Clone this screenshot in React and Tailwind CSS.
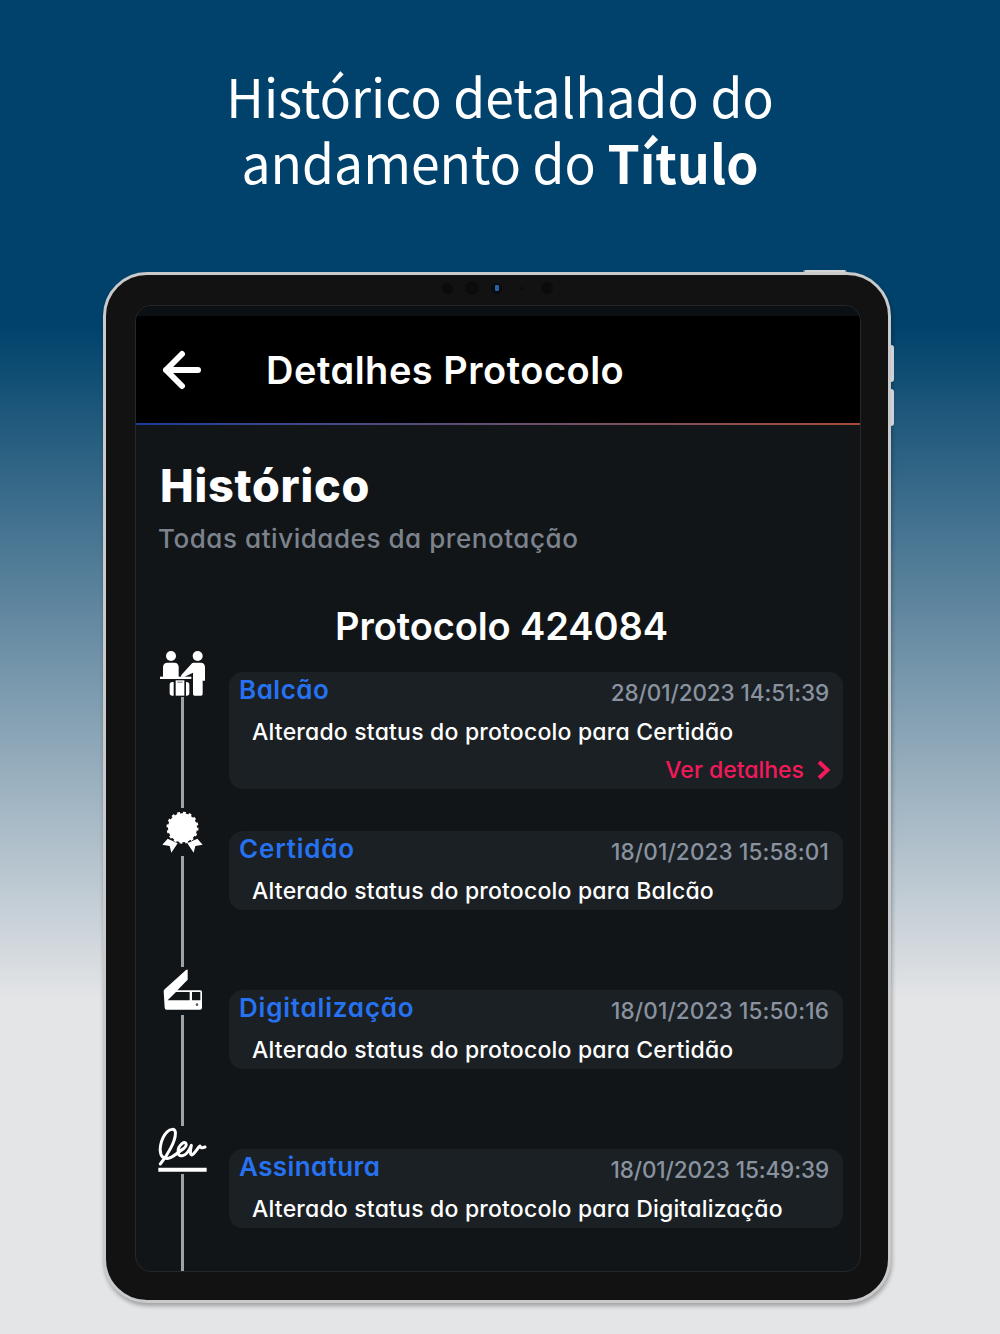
const lexish = "font-['Inter','Liberation_Sans',sans-serif] [font-feature-settings:'cv11']";

function CounterIcon() {
  return (
    <svg viewBox="24 27 147 144" className="block h-12 w-[49px]" fill="white">
      <circle cx="63" cy="48" r="15" />
      <circle cx="143" cy="48" r="15" />
      <path d="M39 111V82q0-14 14-14h20q13 0 13 14v29z" />
      <rect x="30" y="110" width="94" height="7" />
      <path d="M130 68h22q13 0 13 14v40h-7v40q0 5-5 5h-19q-5 0-5-5V98L96 114q-5-5-2-9l28-31q4-6 8-6z" />
      <path d="M71 126h-4q-8 0-8 8v25q0 8 8 8h4zM108 126h2q8 0 8 8v25q0 8-8 8h-2z" />
      <path d="M77 121h26v46H77z" />
      <path d="M82 125h16v3H82z" fill="#70757a" />
    </svg>
  );
}

function AwardIcon() {
  return (
    <svg viewBox="24 24 147 144" className="block h-12 w-[49px]" fill="white">
      <circle cx="97.5" cy="83" r="43.5" />
      <circle cx="97.5" cy="83" r="43" fill="none" stroke="white" strokeWidth="10" strokeDasharray="8.4 8.486" />
      <path d="M53 116l30 14-19 28-5-20-22-4z" />
      <path d="M142 116l-30 14 19 28 5-20 22-4z" />
    </svg>
  );
}

function ScannerIcon() {
  return (
    <svg viewBox="24 21 147 144" className="block h-12 w-[49px]" fill="white">
      <path
        fillRule="evenodd"
        d="M113 29v30L82 91h69q5 0 5 5v47q0 6-6 6H50q-6 0-6-6l-3-49q0-3 3-6l64-58q4-3 5-1zM78 96L53 121h66V96zM126 96v25h25V96z"
      />
      <circle cx="141" cy="134" r="4" fill="#5b6064" />
    </svg>
  );
}

function SignatureIcon() {
  return (
    <svg viewBox="24 33 147 144" className="block h-12 w-[49px]" fill="none" stroke="white" strokeLinecap="round" strokeLinejoin="round">
      <path
        strokeWidth="9"
        d="M31 147C52 121 79 76 76 51C74 40 61 41 51 51C32 70 23 113 39 127C58 140 84 111 101 101C115 89 107 77 96 86C81 98 79 126 97 122C113 119 120 101 124 91C121 106 119 117 125 120C133 119 142 99 150 93C151 101 155 99 165 96"
      />
      <path strokeWidth="12" strokeLinecap="butt" d="M25 164H170" />
    </svg>
  );
}

const events = [
  { title: "Balcão", titleClass: "tracking-[0.5px]", time: "28/01/2023 14:51:39", timeClass: "tracking-[-0.1px]", text: "Alterado status do protocolo para Certidão", Icon: CounterIcon, details: true },
  { title: "Certidão", titleClass: "tracking-[0.8px]", time: "18/01/2023 15:58:01", timeClass: "tracking-[0.15px]", text: "Alterado status do protocolo para Balcão", Icon: AwardIcon },
  { title: "Digitalização", titleClass: "tracking-[0.8px]", time: "18/01/2023 15:50:16", timeClass: "tracking-[0.15px]", text: "Alterado status do protocolo para Certidão", Icon: ScannerIcon },
  { title: "Assinatura", titleClass: "tracking-[0.4px]", time: "18/01/2023 15:49:39", timeClass: "tracking-[-0.1px]", text: "Alterado status do protocolo para Digitalização", Icon: SignatureIcon },
];

function Event({ title, titleClass, time, timeClass, text, Icon, details }) {
  return (
    <li className="flex h-[159px]">
      <div className="flex w-[49px] shrink-0 flex-col items-center">
        <Icon />
        <div className="w-[3px] flex-1 bg-[#9aa2aa]" />
      </div>
      <div className="mt-[23px] ml-[22px] w-[614px]">
        <div className={`rounded-[14px] bg-[#1b2024] pr-[14px] pl-[10px] ${details ? "h-[117px]" : "h-[79px]"}`}>
          <div className="flex items-start justify-between">
            <span className={`pt-[2px] text-[26px] leading-8 font-semibold text-[#2672f0] ${titleClass}`}>{title}</span>
            <span className={`pt-[5px] text-[22.5px] leading-8 font-medium text-[#8993a0] ${timeClass}`}>{time}</span>
          </div>
          <p className="pt-[7px] pl-[13px] text-[23px] leading-8 font-medium tracking-[0.2px] whitespace-nowrap text-white">{text}</p>
          {details && (
            <div className="-mr-[2px] flex items-center justify-end pt-[6px] text-[#f3195a]">
              <span className="text-[23px] leading-8 font-medium">Ver detalhes</span>
              <svg viewBox="0 0 14 20" className="ml-[13px] h-5 w-[14px]" fill="none" stroke="currentColor" strokeWidth="4">
                <path d="M2 2l8.500 8L2 18" />
              </svg>
            </div>
          )}
        </div>
      </div>
    </li>
  );
}

function Camera() {
  return (
    <div className="absolute top-[6px] left-[334px] flex h-[14px] w-[118px] items-center">
      <i className="ml-[2px] size-[11px] rounded-full bg-[#0b0b0b]" />
      <i className="ml-[12px] size-[14px] rounded-full bg-[#0b0b0b]" />
      <i className="ml-[12px] flex size-[11px] items-center justify-center rounded-full bg-[#0a0c10]">
        <i className="h-[6px] w-[4px] rounded-[1px] bg-[#2a5ea6]" />
      </i>
      <i className="ml-[18px] size-[3px] rounded-full bg-[#0a0a0a]" />
      <i className="ml-[18px] size-[12px] shrink-0 rounded-full bg-[#0b0b0b]" />
    </div>
  );
}

export default function App() {
  return (
    <div className="flex h-[1334px] w-[1000px] flex-col items-center overflow-hidden bg-[linear-gradient(#00426b_0,#00426b_325px,#e4e5e7_1000px)]">
      <h1 className="h-[272px] shrink-0 scale-x-[0.974] pt-[62px] text-center font-['Noto_Sans_CJK_SC',sans-serif] text-[53px] leading-[66px] font-normal text-white">
        Histórico detalhado do
        <br />
        andamento do <b>Título</b>
      </h1>
      <div className={`relative -ml-[6px] h-[1031px] w-[788px] shrink-0 rounded-[44px] border-[3px] border-[#c9cacb] bg-[#121212] p-[30px] shadow-[1px_3px_4px_rgba(0,0,0,0.3)] ${lexish}`}>
        <div className="absolute -top-[5px] left-[697px] h-[2px] w-[44px] rounded-t-sm border-x-2 border-[#8b8b8d] bg-[#d3d4d6]" />
        <div className="absolute top-[70px] -right-[6px] h-[37px] w-[3px] rounded-r-sm bg-[#cfd2d4]" />
        <div className="absolute top-[114px] -right-[6px] h-[37px] w-[3px] rounded-r-sm bg-[#cfd2d4]" />
        <Camera />
        <div className="-ml-px h-[967px] w-[726px] overflow-hidden rounded-[16px] border border-[#25282b] bg-[#111518]">
          <div className="h-[10px] bg-[#0b1014]" />
          <header className="flex h-[107px] items-center bg-black pl-[26px]">
            <svg viewBox="0 0 40 40" className="h-10 w-10" fill="none" stroke="white" strokeWidth="6" strokeLinecap="round" strokeLinejoin="round">
              <path d="M20 4L4 20l16 16M4 20h32" />
            </svg>
            <h2 className="mt-[2px] ml-[64px] text-[38px] font-semibold tracking-[0.5px] text-white">Detalhes Protocolo</h2>
          </header>
          <div className="h-[2px] bg-linear-to-r from-[#163c9c] to-[#a54c33]" />
          <h3 className="h-[92px] pt-[31px] pl-[24px] text-[45px] leading-[60px] font-extrabold tracking-[0.75px] text-white">Histórico</h3>
          <p className="h-10 pt-[2px] pl-[22px] text-[26px] leading-10 font-medium tracking-[0.55px] text-[#7c838c]">Todas atividades da prenotação</p>
          <h4 className="h-[92px] pt-[49px] pl-[7px] text-center text-[38px] leading-10 font-semibold tracking-[-0.1px] text-white">Protocolo 424084</h4>
          <ul className="pl-[22px]">
            {events.map((e) => <Event key={e.time} {...e} />)}
          </ul>
        </div>
      </div>
    </div>
  );
}
